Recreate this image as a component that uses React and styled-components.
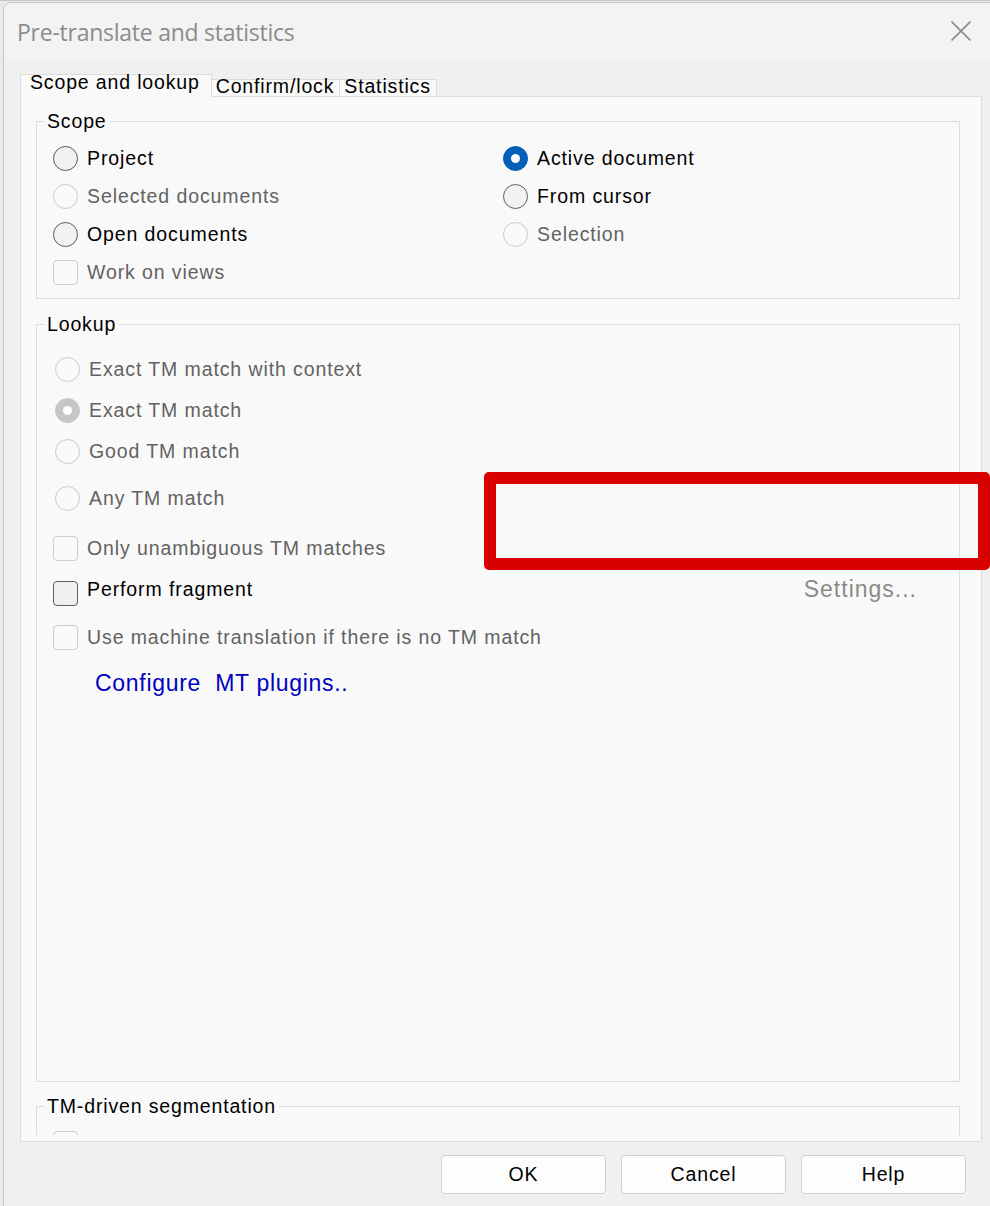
import React from "react";
import styled, { createGlobalStyle } from "styled-components";

const UI = `"Liberation Sans", Arial, sans-serif`;

const Global = createGlobalStyle`
  html, body {
    margin: 0;
    padding: 0;
    width: 990px;
    height: 1206px;
    overflow: hidden;
    background: #ebebeb;
  }
  #root { width: 990px; height: 1206px; }
`;

const Page = styled.div`
  position: relative;
  box-sizing: border-box;
  width: 990px;
  height: 1206px;
  overflow: hidden;
  padding: 2px 0 0 3px;
  background: #ebebeb;
  border-top: 1px solid #c4c4c4;
`;

const Window = styled.div`
  box-sizing: border-box;
  width: 1010px;
  height: 1210px;
  margin-top: -1px;
  border: 1px solid #c3c3c3;
  border-radius: 8px;
  background: #f0f0f0;
  display: flex;
  flex-direction: column;
  overflow: hidden;
`;

const TitleBar = styled.div`
  height: 56px;
  flex-shrink: 0;
  background: #f3f3f3;
  display: flex;
  align-items: center;
  justify-content: space-between;
  padding: 0 41px 0 13px;
`;

const Title = styled.div`
  font-family: "Open Sans", "Noto Sans", sans-serif;
  font-size: 23px;
  letter-spacing: -0.25px;
  color: #8b8b8b;
  margin-top: 1px;
`;

const CloseButton = styled.div`
  width: 20px;
  height: 20px;
  margin-top: -1px;
  display: flex;
`;

const Body = styled.div`
  flex: 1;
  display: flex;
  flex-direction: column;
  padding: 15px 30px 0 16px;
`;

const TabStrip = styled.div`
  display: flex;
  align-items: flex-end;
  height: 23px;
  margin-bottom: -1px;
  position: relative;
  z-index: 1;
`;

const Tab = styled.div`
  box-sizing: border-box;
  height: ${(p) => (p.$active ? 23 : 18)}px;
  padding: ${(p) => (p.$active ? "0 11px 0 9px" : "0 5px 0 4px")};
  background: #f9f9f9;
  border: 1px solid #dcdcdc;
  border-bottom: ${(p) => (p.$active ? "none" : "1px solid #dcdcdc")};
  margin-left: ${(p) => (p.$active ? 0 : -1)}px;
  font-family: ${UI};
  font-size: 19.5px;
  letter-spacing: 0.85px;
  line-height: ${(p) => (p.$active ? 15 : 12)}px;
  color: #000;
  white-space: nowrap;
`;

const Pane = styled.div`
  box-sizing: border-box;
  height: 1046px;
  border: 1px solid #dcdcdc;
  background: #f9f9f9;
  padding: 12px 21px 6px 15px;
  display: flex;
  flex-direction: column;
`;

const PaneClip = styled.div`
  flex: 1;
  overflow: hidden;
  display: flex;
  flex-direction: column;
`;

const Group = styled.fieldset`
  box-sizing: border-box;
  flex-shrink: 0;
  min-width: 0;
  margin: ${(p) => p.$mt || 0}px 0 0 0;
  padding: 0;
  border: 1px solid #dcdcdc;
  height: ${(p) => (p.$h ? `${p.$h}px` : "auto")};
`;

const Legend = styled.legend`
  margin-left: 7px;
  padding: 0 3px;
  font-family: ${UI};
  font-size: 19.5px;
  letter-spacing: 0.85px;
  line-height: 24px;
  color: #000;
`;

const ScopeGrid = styled.div`
  display: grid;
  grid-template-columns: 450px 1fr;
  grid-template-rows: repeat(4, 38px);
  grid-auto-flow: column;
  padding: 6px 16px 7px 16px;
`;

const Stack = styled.div`
  display: flex;
  flex-direction: column;
  padding: ${(p) => p.$pt || 0}px 16px 0 16px;
`;

const Row = styled.div`
  height: 38px;
  flex-shrink: 0;
  display: flex;
  align-items: center;
  margin-top: ${(p) => p.$mt || 0}px;
  padding-left: ${(p) => p.$indent || 0}px;
`;

const RadioMark = styled.span`
  box-sizing: border-box;
  width: 25px;
  height: 25px;
  flex-shrink: 0;
  border-radius: 50%;
  display: flex;
  align-items: center;
  justify-content: center;
  border: 1.5px solid
    ${(p) =>
      p.$checked ? (p.$disabled ? "#c6c6c6" : "#005fb8") : p.$disabled ? "#c9c9c9" : "#5c5c5c"};
  background: ${(p) =>
    p.$checked ? (p.$disabled ? "#c6c6c6" : "#005fb8") : p.$disabled ? "#fafafa" : "#f2f2f2"};
  &::after {
    content: "";
    display: ${(p) => (p.$checked ? "block" : "none")};
    width: 9px;
    height: 9px;
    border-radius: 50%;
    background: #fff;
  }
`;

const CheckMark = styled.span`
  box-sizing: border-box;
  width: 25px;
  height: 25px;
  flex-shrink: 0;
  border-radius: 4px;
  border: 1.5px solid ${(p) => (p.$disabled ? "#cdcdcd" : "#5e5e5e")};
  background: ${(p) => (p.$disabled ? "#fafafa" : "#f0f0f0")};
  transform: translateY(${(p) => p.$drop || 0}px);
`;

const Label = styled.span`
  margin-left: 9px;
  font-family: ${UI};
  font-size: 19.5px;
  letter-spacing: 0.9px;
  white-space: nowrap;
  color: ${(p) => (p.$disabled ? "#626262" : "#000")};
`;

const SideLink = styled.span`
  margin-left: auto;
  margin-right: 26px;
  font-family: ${UI};
  font-size: 23px;
  letter-spacing: 1px;
  color: #8a8a8a;
`;

const Link = styled.span`
  margin-left: 42px;
  font-family: ${UI};
  font-size: 23px;
  letter-spacing: 0.7px;
  color: #0000c0;
  white-space: pre;
`;

const ButtonRow = styled.div`
  display: flex;
  justify-content: flex-end;
  gap: 15px;
  margin-top: 13px;
  padding-right: 16px;
`;

const Button = styled.div`
  box-sizing: border-box;
  width: 165px;
  height: 39px;
  border: 1px solid #d0d0d0;
  border-radius: 4px;
  background: #fdfdfd;
  display: flex;
  align-items: center;
  justify-content: center;
  font-family: ${UI};
  font-size: 19.5px;
  letter-spacing: 0.85px;
  color: #000;
`;

const Highlight = styled.div`
  position: absolute;
  left: 484px;
  top: 471px;
  width: 506px;
  height: 98px;
  box-sizing: border-box;
  border: 12px solid #d90000;
  border-radius: 5px;
  pointer-events: none;
`;

const Radio = ({ label, checked, disabled, indent, mt }) => (
  <Row $indent={indent} $mt={mt}>
    <RadioMark $checked={checked} $disabled={disabled} />
    <Label $disabled={disabled}>{label}</Label>
  </Row>
);

const Check = ({ label, disabled, mt, drop, children }) => (
  <Row $mt={mt}>
    <CheckMark $disabled={disabled} $drop={drop} />
    {label && <Label $disabled={disabled}>{label}</Label>}
    {children}
  </Row>
);

export default function App() {
  return (
    <Page>
      <Global />
      <Window>
        <TitleBar>
          <Title>Pre-translate and statistics</Title>
          <CloseButton>
            <svg width="20" height="20" viewBox="0 0 20 20">
              <path d="M0.5 0.5 L19.5 19.5 M19.5 0.5 L0.5 19.5" stroke="#8c8c8c" strokeWidth="1.6" fill="none" />
            </svg>
          </CloseButton>
        </TitleBar>
        <Body>
          <TabStrip>
            <Tab $active>Scope and lookup</Tab>
            <Tab>Confirm/lock</Tab>
            <Tab>Statistics</Tab>
          </TabStrip>
          <Pane>
            <PaneClip>
              <Group>
                <Legend>Scope</Legend>
                <ScopeGrid>
                  <Radio label="Project" />
                  <Radio label="Selected documents" disabled />
                  <Radio label="Open documents" />
                  <Check label="Work on views" disabled />
                  <Radio label="Active document" checked />
                  <Radio label="From cursor" />
                  <Radio label="Selection" disabled />
                </ScopeGrid>
              </Group>
              <Group $mt={13} $h={770}>
                <Legend>Lookup</Legend>
                <Stack $pt={14}>
                  <Radio label="Exact TM match with context" disabled indent={2} />
                  <Radio label="Exact TM match" disabled checked indent={2} mt={3} />
                  <Radio label="Good TM match" disabled indent={2} mt={3} />
                  <Radio label="Any TM match" disabled indent={2} mt={9} />
                  <Check label="Only unambiguous TM matches" disabled mt={12} />
                  <Check label="Perform fragment" mt={3} drop={4}>
                    <SideLink>Settings...</SideLink>
                  </Check>
                  <Check label="Use machine translation if there is no TM match" disabled mt={10} />
                  <Row $mt={8}>
                    <Link>{"Configure  MT plugins.."}</Link>
                  </Row>
                </Stack>
              </Group>
              <Group $mt={12}>
                <Legend>TM-driven segmentation</Legend>
                <Stack $pt={6}>
                  <Check disabled />
                </Stack>
              </Group>
            </PaneClip>
          </Pane>
          <ButtonRow>
            <Button>OK</Button>
            <Button>Cancel</Button>
            <Button>Help</Button>
          </ButtonRow>
        </Body>
      </Window>
      <Highlight />
    </Page>
  );
}
